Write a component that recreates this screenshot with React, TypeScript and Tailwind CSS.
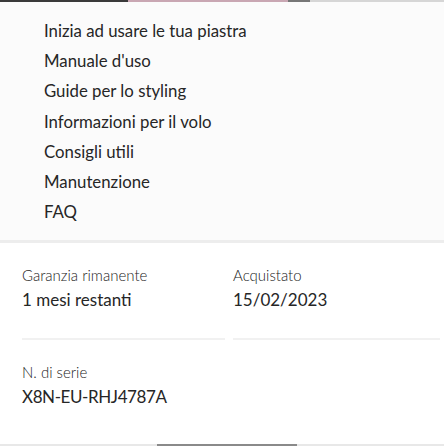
const menu = [
  "Inizia ad usare le tua piastra",
  "Manuale d'uso",
  "Guide per lo styling",
  "Informazioni per il volo",
  "Consigli utili",
  "Manutenzione",
  "FAQ",
];

function Info({ label, value }: { label: string; value: string }) {
  return (
    <div className="flex flex-col border-b-2 border-[#f1f1f1] pb-[27px]">
      <span className="text-[15px] font-light leading-[20px] text-[#222]">{label}</span>
      <span className="mt-[4px] text-[17px] leading-[22px] text-[#262626]">{value}</span>
    </div>
  );
}

export default function App() {
  return (
    <div className="flex h-[446px] w-[444px] flex-col overflow-hidden bg-white font-['Lato','Liberation_Sans',sans-serif]">
      <div className="flex h-[2px] w-full">
        <div className="w-[128px] bg-[#3a3a3a]" />
        <div className="w-[160px] bg-[#c9a7b3]" />
        <div className="w-[22px] bg-[#777]" />
        <div className="flex-1 bg-[#d6d6d6]" />
      </div>
      <div className="flex flex-col bg-[#fbfbfb] pb-[13px] pl-[44px] pt-[14px]">
        {menu.map((m) => (
          <div key={m} className="h-[30.2px] text-[16.8px] leading-[30px] text-[#262626]">
            {m}
          </div>
        ))}
      </div>
      <div className="h-[3px] bg-[#ededed]" />
      <div className="flex flex-col gap-[22px] pl-[22px] pr-[4px] pt-[22px]">
        <div className="grid grid-cols-[203px_1fr] gap-[8px]">
          <Info label="Garanzia rimanente" value="1 mesi restanti" />
          <Info label="Acquistato" value="15/02/2023" />
        </div>
        <div className="flex flex-col">
          <span className="text-[15px] font-light leading-[20px] text-[#222]">N. di serie</span>
          <span className="mt-[4px] text-[17px] leading-[22px] tracking-[-0.4px] text-[#262626]">X8N-EU-RHJ4787A</span>
        </div>
      </div>
      <div className="mt-auto flex h-[2px] w-full bg-[#e8e8e8]">
        <div className="ml-[157px] w-[140px] bg-[#8a8a8a]" />
      </div>
    </div>
  );
}
